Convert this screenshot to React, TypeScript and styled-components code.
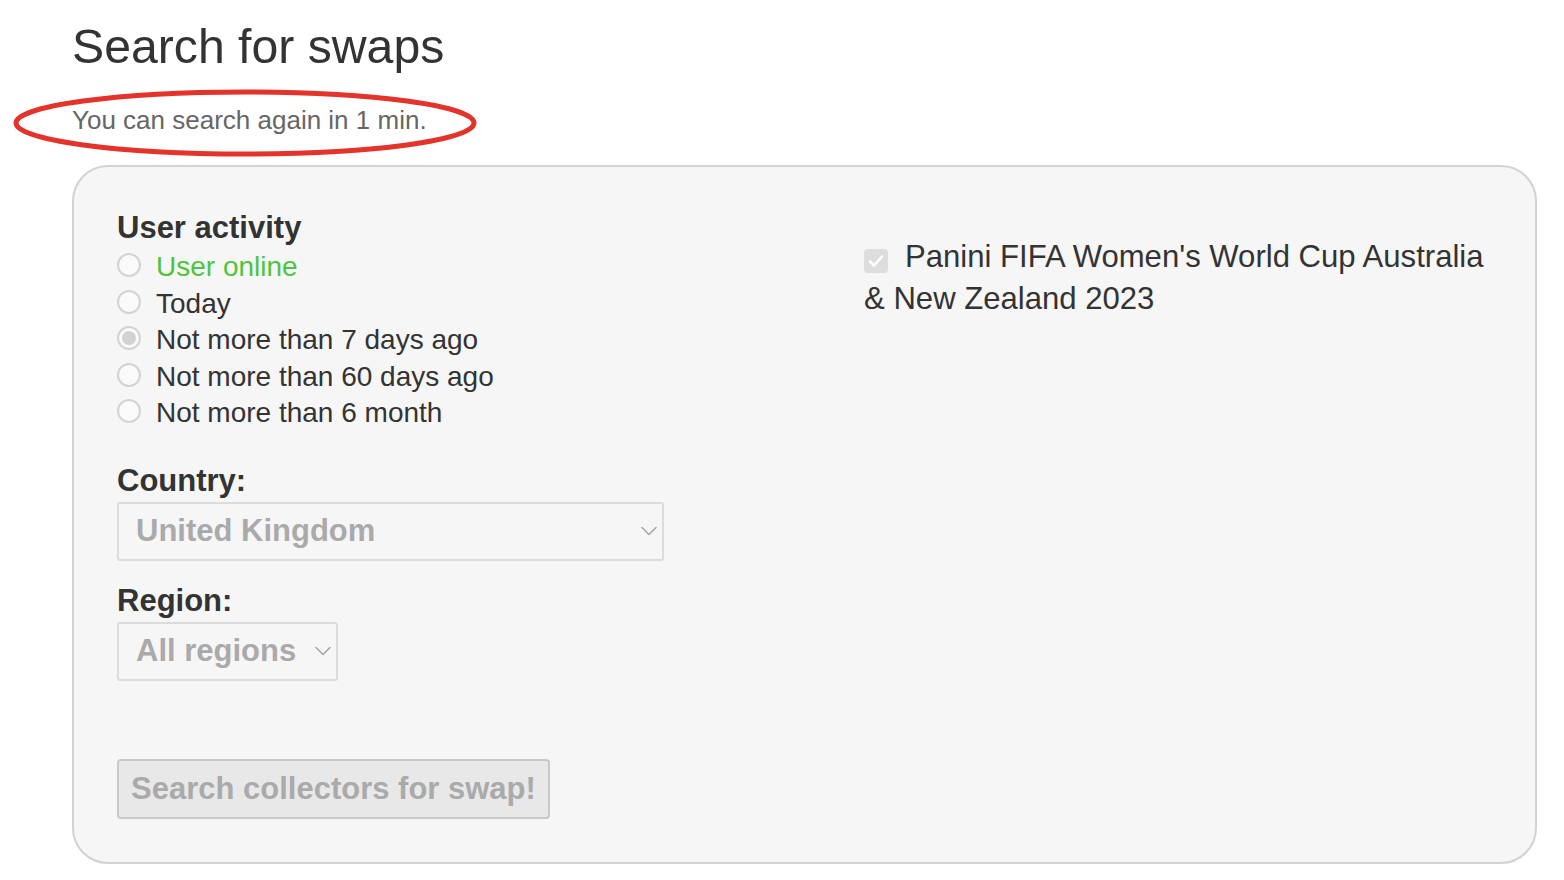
import React from "react";
import styled, { createGlobalStyle } from "styled-components";

const GlobalStyle = createGlobalStyle`
  html, body {
    margin: 0;
    padding: 0;
    background: #ffffff;
  }
  body {
    font-family: "Liberation Sans", Arial, Helvetica, sans-serif;
    color: #333333;
  }
`;

const Page = styled.main`
  padding: 18px 27px 0 72px;
  box-sizing: border-box;
  width: 1564px;
`;

const Title = styled.h1`
  margin: 0;
  font-size: 48.2px;
  line-height: 56px;
  font-weight: 400;
  color: #333333;
`;

const NoticeWrap = styled.div`
  position: relative;
  display: inline-block;
  margin-top: 31px;
`;

const Notice = styled.p`
  margin: 0;
  font-size: 26px;
  line-height: 30px;
  color: #666666;
`;

const Annotation = styled.svg`
  position: absolute;
  left: -59px;
  top: -16px;
  width: 466px;
  height: 68px;
  overflow: visible;
  pointer-events: none;
`;

const Card = styled.section`
  margin-top: 30px;
  box-sizing: border-box;
  width: 1465px;
  background: #f6f6f6;
  border: 2px solid #d2d2d2;
  border-radius: 36px;
  padding: 43px 43px 43px 43px;
  display: grid;
  grid-template-columns: 747px 1fr;
`;

const LeftCol = styled.div`
  display: flex;
  flex-direction: column;
  align-items: flex-start;
`;

const RightCol = styled.div`
  padding-top: 26px;
`;

const Heading = styled.h3<{ $gap?: number }>`
  margin: ${(p) => p.$gap ?? 0}px 0 3px 0;
  font-size: 31px;
  line-height: 36px;
  font-weight: 700;
  color: #333333;
`;

const RadioList = styled.div`
  display: flex;
  flex-direction: column;
`;

const RadioRow = styled.label<{ $accent?: boolean }>`
  display: flex;
  align-items: flex-start;
  gap: 15px;
  height: 36.6px;
  font-size: 28px;
  line-height: 36.6px;
  color: ${(p) => (p.$accent ? "#4fc43a" : "#333333")};
`;

const RadioCircle = styled.span<{ $checked?: boolean }>`
  flex: none;
  box-sizing: border-box;
  width: 24px;
  height: 24px;
  margin-top: 4px;
  border-radius: 50%;
  border: 2px solid #d3d3d3;
  background: #fafafa;
  display: flex;
  align-items: center;
  justify-content: center;
  &::after {
    content: "";
    display: ${(p) => (p.$checked ? "block" : "none")};
    width: 14px;
    height: 14px;
    border-radius: 50%;
    background: #d2d2d2;
  }
`;

const SelectBox = styled.div<{ $width?: number }>`
  box-sizing: border-box;
  height: 59px;
  width: ${(p) => (p.$width ? `${p.$width}px` : "auto")};
  display: inline-flex;
  align-items: center;
  justify-content: space-between;
  gap: 19px;
  padding: 0 5px 0 17px;
  border: 2px solid #dcdcdc;
  border-radius: 3px;
  background: #f6f6f6;
  font-size: 31px;
  font-weight: 700;
  color: #aaaaaa;
`;

const Chevron = styled.svg`
  flex: none;
  width: 16px;
  height: 10px;
`;

const SubmitButton = styled.button`
  margin-top: 78px;
  box-sizing: border-box;
  height: 60px;
  padding: 0 12px;
  border: 2px solid #c9c9c9;
  border-radius: 4px;
  background: #e8e8e8;
  font-family: "Liberation Sans", Arial, Helvetica, sans-serif;
  font-size: 31px;
  font-weight: 700;
  color: #aaaaaa;
  cursor: default;
`;

const AlbumText = styled.p`
  margin: 0;
  font-size: 31.1px;
  line-height: 41.6px;
  color: #333333;
`;

const CheckBox = styled.span`
  display: inline-flex;
  align-items: center;
  justify-content: center;
  box-sizing: border-box;
  width: 24px;
  height: 24px;
  margin-right: 17px;
  vertical-align: -1px;
  border-radius: 4px;
  background: #dddddd;
`;

const activities = [
  { label: "User online", accent: true },
  { label: "Today" },
  { label: "Not more than 7 days ago", checked: true },
  { label: "Not more than 60 days ago" },
  { label: "Not more than 6 month" },
];

const ChevronIcon = () => (
  <Chevron viewBox="0 0 16 10" fill="none">
    <path d="M1 1.5 L8 8.5 L15 1.5" stroke="#a6a6a6" strokeWidth="1.6" strokeLinecap="round" strokeLinejoin="round" />
  </Chevron>
);

export default function App() {
  return (
    <>
      <GlobalStyle />
      <Page>
        <Title>Search for swaps</Title>
        <NoticeWrap>
          <Notice>You can search again in 1 min.</Notice>
          <Annotation viewBox="0 0 466 68">
            <ellipse cx="232" cy="34" rx="229" ry="31" fill="none" stroke="#e3332a" strokeWidth="5" />
          </Annotation>
        </NoticeWrap>
        <Card>
          <LeftCol>
            <Heading>User activity</Heading>
            <RadioList>
              {activities.map((a) => (
                <RadioRow key={a.label} $accent={a.accent}>
                  <RadioCircle $checked={a.checked} />
                  {a.label}
                </RadioRow>
              ))}
            </RadioList>
            <Heading $gap={30.6}>Country:</Heading>
            <SelectBox $width={547}>
              <span>United Kingdom</span>
              <ChevronIcon />
            </SelectBox>
            <Heading $gap={22}>Region:</Heading>
            <SelectBox>
              <span>All regions</span>
              <ChevronIcon />
            </SelectBox>
            <SubmitButton type="button" disabled>
              Search collectors for swap!
            </SubmitButton>
          </LeftCol>
          <RightCol>
            <AlbumText>
              <CheckBox>
                <svg width="16" height="14" viewBox="0 0 16 14" fill="none">
                  <path d="M2 7.5 L6 11.5 L14 2.5" stroke="#ffffff" strokeWidth="2.6" strokeLinecap="round" strokeLinejoin="round" />
                </svg>
              </CheckBox>
              Panini FIFA Women's World Cup Australia &amp; New Zealand 2023
            </AlbumText>
          </RightCol>
        </Card>
      </Page>
    </>
  );
}
